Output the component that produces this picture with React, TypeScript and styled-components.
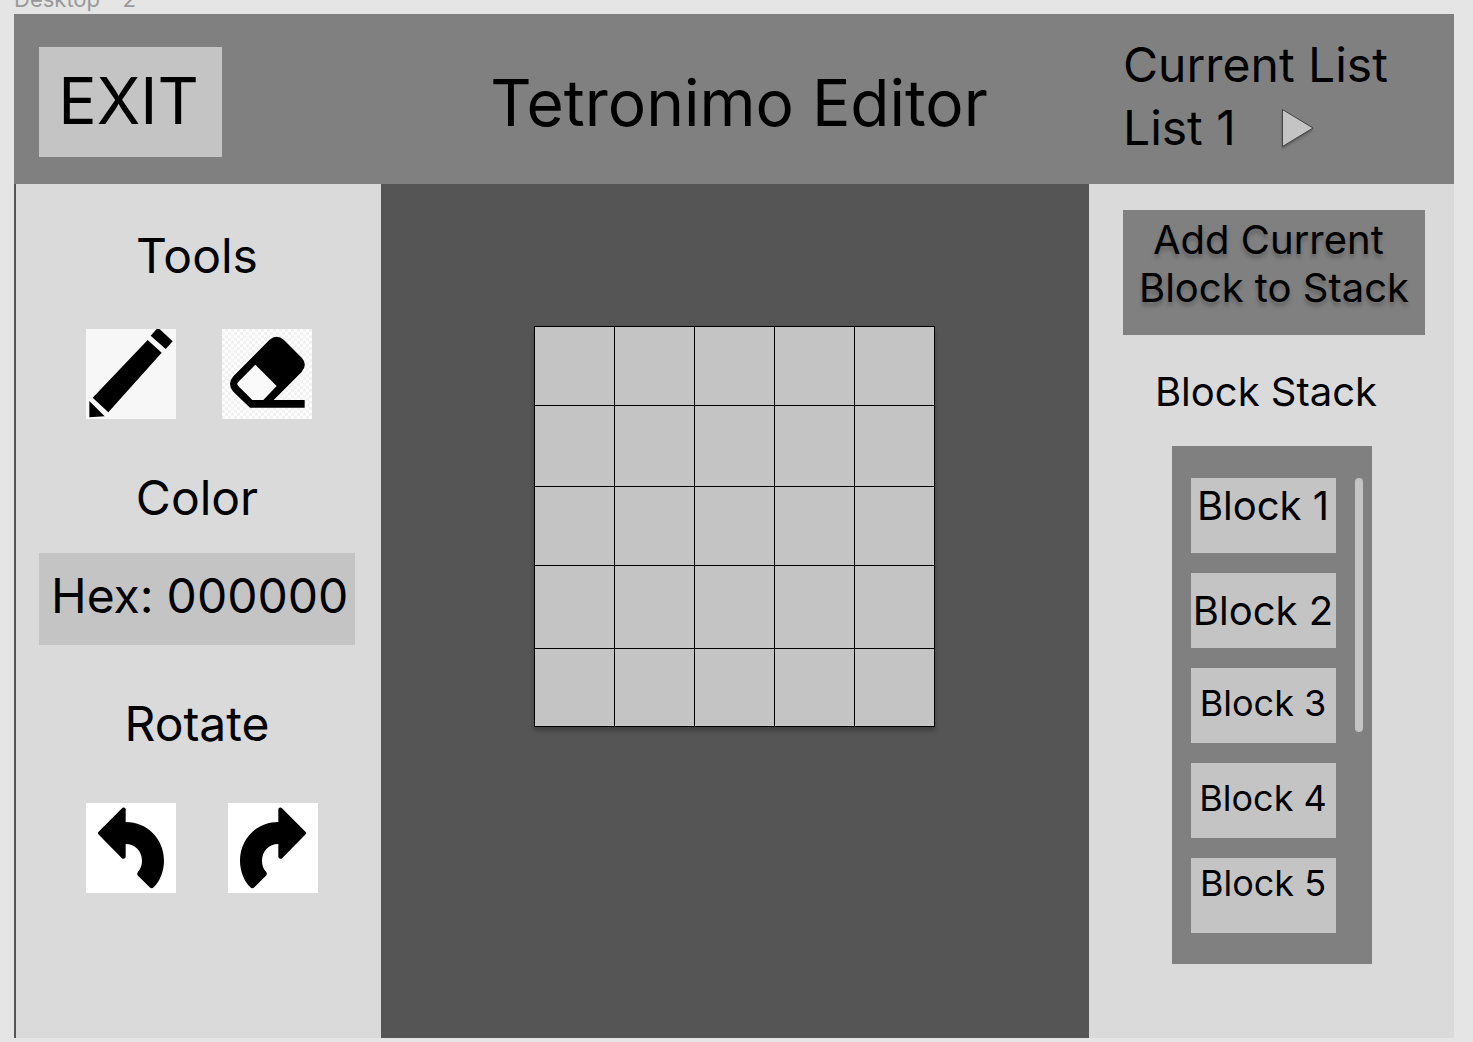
import React from "react";
import styled, { createGlobalStyle } from "styled-components";

const GlobalStyle = createGlobalStyle`
  * { box-sizing: border-box; }
  body {
    margin: 0;
    background: #e5e5e5;
    color: #000;
    font-family: Inter, "Liberation Sans", sans-serif;
    font-optical-sizing: none;
  }
  button, input {
    font: inherit;
    color: inherit;
    border: 0;
    border-radius: 0;
    padding: 0;
    margin: 0;
  }
  button { cursor: pointer; }
`;

const Page = styled.div`
  display: flex;
  flex-direction: column;
  min-height: 100vh;
  padding: 0 19px 4px 14px;
`;

const FrameLabel = styled.div`
  display: flex;
  align-items: flex-end;
  height: 14px;
  overflow: hidden;
  color: #999;
  font-size: 22px;
  line-height: 30px;
`;

const Frame = styled.div`
  flex: 1;
  display: flex;
  flex-direction: column;
  background: #555;
`;

const Header = styled.header`
  display: grid;
  grid-template-columns: 367px 1fr 365px;
  align-items: center;
  height: 170px;
  background: #808080;
`;

const ExitButton = styled.button`
  justify-self: start;
  width: 183px;
  height: 110px;
  margin: 6px 0 0 25px;
  padding: 0 4px 2px 0;
  background: #c4c4c4;
  font-size: 64px;
  line-height: 78px;
`;

const Title = styled.h1`
  margin: 0;
  padding: 8px 0 0 8px;
  font-size: 64px;
  font-weight: 400;
  line-height: 78px;
  text-align: center;
  white-space: nowrap;
`;

const CurrentList = styled.div`
  display: flex;
  flex-direction: column;
  gap: 5px;
  padding: 0 0 6px 34px;
  font-size: 48px;
  line-height: 58px;
`;

const ListRow = styled.div`
  display: flex;
  align-items: center;
  gap: 45px;
`;

const NextButton = styled.button`
  display: flex;
  background: none;
  svg { filter: drop-shadow(0 2px 1px rgba(0, 0, 0, 0.25)); }
`;

const Body = styled.div`
  flex: 1;
  display: grid;
  grid-template-columns: 367px 1fr 365px;
`;

const ToolPanel = styled.aside`
  margin-left: 2px;
  padding: 43px 26px 0 23px;
  background: #dadada;
`;

const PanelHeading = styled.h2`
  margin: 0;
  font-size: 48px;
  font-weight: 400;
  line-height: 58px;
  text-align: center;
`;

const IconRow = styled.div<{ $top: number; $gap: number }>`
  display: flex;
  gap: ${(p) => p.$gap}px;
  padding: ${(p) => p.$top}px 0 50px 47px;
`;

const IconButton = styled.button<{ $checker?: boolean }>`
  width: 90px;
  height: 90px;
  background: ${(p) =>
    p.$checker
      ? "repeating-conic-gradient(#f2f2f2 0% 25%, #fdfdfd 0% 50%) 0 0 / 6px 6px"
      : p.color};
  svg { display: block; }
`;

const HexField = styled.label`
  display: flex;
  gap: 13px;
  height: 92px;
  margin: 26px 0 50px;
  padding: 14px 0 0 12px;
  background: #c4c4c4;
  font-size: 48px;
  line-height: 58px;
`;

const HexInput = styled.input`
  flex: 1;
  min-width: 0;
  height: 58px;
  background: none;
  outline: none;
`;

const Workspace = styled.main`
  display: flex;
  justify-content: center;
  align-items: flex-start;
  padding-top: 142px;
`;

const Board = styled.div`
  display: grid;
  grid-template-columns: repeat(5, 79px);
  grid-template-rows: 78px 80px 78px 82px 77px;
  gap: 1px;
  margin-right: 1px;
  border: 1px solid #000;
  background: #000;
  box-shadow: 0 4px 4px rgba(0, 0, 0, 0.25);
`;

const Cell = styled.button`
  background: #c4c4c4;
`;

const StackPanel = styled.aside`
  display: flex;
  flex-direction: column;
  align-items: center;
  padding-top: 26px;
  background: #dadada;
`;

const AddButton = styled.button`
  width: 302px;
  height: 125px;
  margin-left: 5px;
  padding-bottom: 17px;
  background: #808080;
  font-size: 40px;
  line-height: 48px;
  white-space: pre;
  text-shadow: 0 4px 4px rgba(0, 0, 0, 0.25);
`;

const StackHeading = styled.h2`
  margin: 0;
  padding: 33px 11px 30px 0;
  font-size: 40px;
  font-weight: 400;
  line-height: 48px;
`;

const StackBox = styled.div`
  display: flex;
  gap: 19px;
  width: 200px;
  padding: 32px 9px 31px 19px;
  background: #808080;
`;

const BlockList = styled.div`
  display: flex;
  flex-direction: column;
  gap: 20px;
`;

const BlockButton = styled.button<{ $size: number; $raised?: boolean }>`
  display: flex;
  justify-content: center;
  width: 145px;
  height: 75px;
  padding-top: ${(p) => (p.$raised ? 3 : 13)}px;
  background: #c4c4c4;
  font-size: ${(p) => p.$size}px;
  line-height: ${(p) => (p.$size === 40 ? 50 : 44)}px;
  white-space: nowrap;
`;

const ScrollThumb = styled.div`
  width: 8px;
  height: 254px;
  border-radius: 4px;
  background: #c4c4c4;
`;

const blocks = [
  { name: "Block 1", size: 40, raised: true },
  { name: "Block 2", size: 40 },
  { name: "Block 3", size: 36 },
  { name: "Block 4", size: 36 },
  { name: "Block 5", size: 36, raised: true },
];

const PencilIcon = () => (
  <svg width="90" height="90" viewBox="0 0 270 270" aria-hidden="true">
    <path d="M194 20L210 2Q216 -4 223 2L260 37L239 60ZM185 33L227 71L67 250L20 206ZM10 216L56 262L10 265Z" />
  </svg>
);

const EraserIcon = () => (
  <svg width="90" height="90" viewBox="0 0 270 270" aria-hidden="true">
    <path d="M84 236L34 188Q14 165 34 142L142 33Q164 13 186 33L239 86Q258 106 239 129L155 213H248V236Z" />
    <path d="M100 107L164 171L124 213H91L48 170Q44 165 48 160Z" fill="#fafafa" />
  </svg>
);

const TurnIcon = ({ flip = false }: { flip?: boolean }) => (
  <svg width="90" height="90" viewBox="0 0 270 270" aria-hidden="true">
    <path
      transform={flip ? "translate(270 0) scale(-1 1)" : undefined}
      d="M37 87L108 16Q113 11 119 17V57C184 57 234 108 234 173C234 205 221 235 203 253Q197 259 191 253L156 218Q151 212 156 206C164 197 168 186 168 173C168 145 147 123 119 123V163Q113 171 107 165L37 94Q34 91 37 87Z"
    />
  </svg>
);

export default function App() {
  return (
    <>
      <GlobalStyle />
      <Page>
        <FrameLabel>Desktop - 2</FrameLabel>
        <Frame>
          <Header>
            <ExitButton>EXIT</ExitButton>
            <Title>Tetronimo Editor</Title>
            <CurrentList>
              <div>Current List</div>
              <ListRow>
                <span>List 1</span>
                <NextButton aria-label="Next list">
                  <svg width="34" height="40" viewBox="0 0 34 40">
                    <path d="M1.5 1.5L32 20L1.5 38.5Z" fill="#c4c4c4" stroke="#444" />
                  </svg>
                </NextButton>
              </ListRow>
            </CurrentList>
          </Header>
          <Body>
            <ToolPanel>
              <PanelHeading>Tools</PanelHeading>
              <IconRow $top={44} $gap={46}>
                <IconButton color="#f7f7f7" aria-label="Pencil">
                  <PencilIcon />
                </IconButton>
                <IconButton $checker aria-label="Eraser">
                  <EraserIcon />
                </IconButton>
              </IconRow>
              <PanelHeading>Color</PanelHeading>
              <HexField>
                Hex:
                <HexInput defaultValue="000000" maxLength={6} />
              </HexField>
              <PanelHeading>Rotate</PanelHeading>
              <IconRow $top={50} $gap={52}>
                <IconButton color="#fff" aria-label="Rotate left">
                  <TurnIcon />
                </IconButton>
                <IconButton color="#fff" aria-label="Rotate right">
                  <TurnIcon flip />
                </IconButton>
              </IconRow>
            </ToolPanel>
            <Workspace>
              <Board>
                {Array.from({ length: 25 }, (_, i) => (
                  <Cell
                    key={i}
                    aria-label={`Row ${Math.floor(i / 5) + 1}, column ${(i % 5) + 1}`}
                  />
                ))}
              </Board>
            </Workspace>
            <StackPanel>
              <AddButton>{"Add Current \nBlock to Stack"}</AddButton>
              <StackHeading>Block Stack</StackHeading>
              <StackBox>
                <BlockList>
                  {blocks.map((b) => (
                    <BlockButton key={b.name} $size={b.size} $raised={b.raised}>
                      {b.name}
                    </BlockButton>
                  ))}
                </BlockList>
                <ScrollThumb />
              </StackBox>
            </StackPanel>
          </Body>
        </Frame>
      </Page>
    </>
  );
}
